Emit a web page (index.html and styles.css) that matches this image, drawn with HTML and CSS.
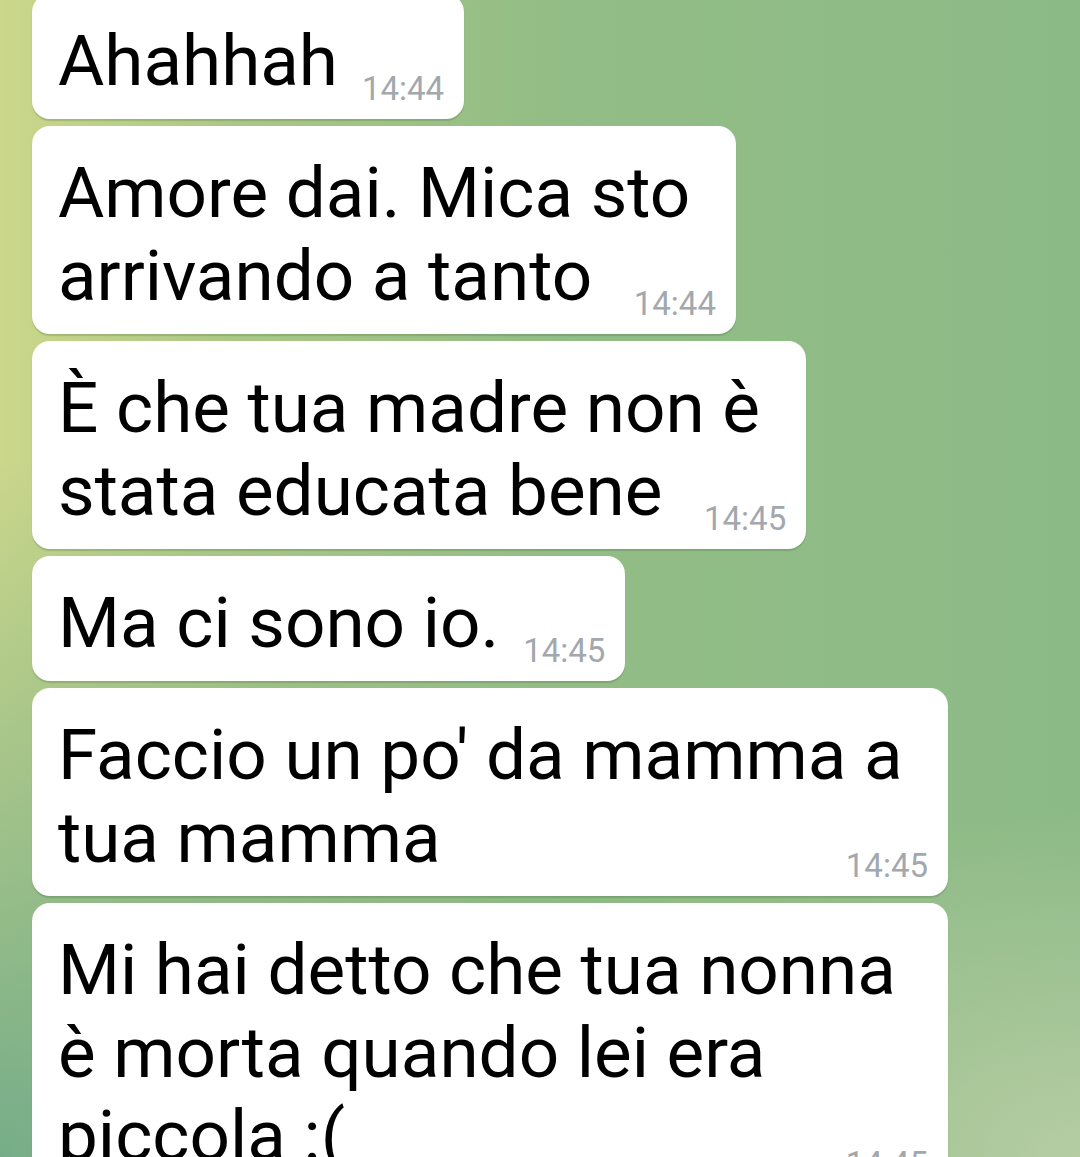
FILE: index.html
```html
<!DOCTYPE html>
<html lang="it">
<head>
    <meta charset="UTF-8">
    <meta name="viewport" content="width=device-width, initial-scale=1.0">
    <title>Chat</title>
    <link rel="stylesheet" href="styles.css">
</head>
<body>
    <div class="chat">
        <div class="bubble">Ahahhah<span class="time">14:44</span></div>
        <div class="bubble">Amore dai. Mica sto<br>arrivando a tanto <span class="time">14:44</span></div>
        <div class="bubble">È che tua madre non è<br>stata educata bene <span class="time">14:45</span></div>
        <div class="bubble">Ma ci sono io.<span class="time">14:45</span></div>
        <div class="bubble bubble-wide">Faccio un po' da mamma a tua mamma<span class="time">14:45</span></div>
        <div class="bubble bubble-wide">Mi hai detto che tua nonna è morta quando lei era piccola :(<span class="time">14:45</span></div>
    </div>
</body>
</html>
```

FILE: styles.css
```css
html, body {
    height: 100%;
}
body {
    margin: 0;
    overflow: hidden;
    font-family: Roboto, "Liberation Sans", sans-serif;
    color: #000;
    background:
        radial-gradient(ellipse 45% 30% at 100% 100%, rgba(184, 206, 164, 0.95), rgba(184, 206, 164, 0)),
        radial-gradient(ellipse 70% 60% at 0% 100%, rgba(118, 173, 136, 1), rgba(118, 173, 136, 0)),
        linear-gradient(to right, #cbd78b 0%, #aac785 22%, #93bd85 50%, #8cba87 100%);
}
.chat {
    display: flex;
    flex-direction: column;
    align-items: flex-start;
    gap: 7px;
    margin-top: -6px;
    padding-left: 32px;
}
.bubble {
    max-width: 870px;
    padding: 25px 20px 17px 26px;
    background-color: #fff;
    border-radius: 18px;
    box-shadow: 0 2px 1px rgba(40, 80, 40, 0.2);
    font-size: 71px;
    line-height: 83px;
}
.time {
    margin-left: 24px;
    font-size: 33px;
    line-height: 0;
    vertical-align: -15px;
    color: #a2a8ad;
}
.bubble-wide {
    padding-bottom: 14px;
}
.bubble-wide .time {
    display: block;
    margin-top: -30px;
    line-height: 33px;
    text-align: right;
    vertical-align: baseline;
}
```
